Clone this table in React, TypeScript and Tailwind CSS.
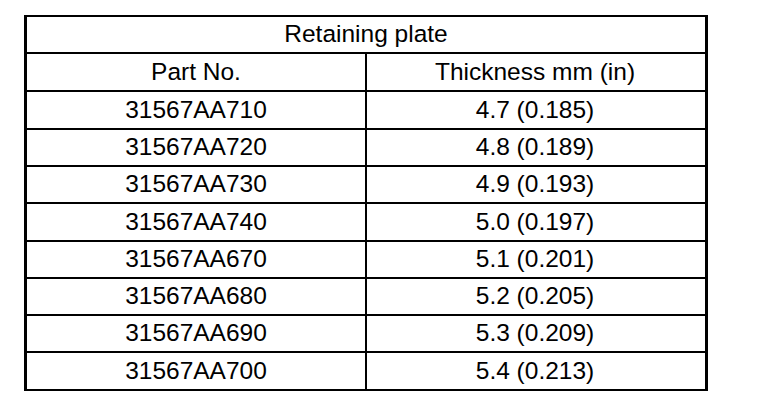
import React from "react";

const rows: [string, string, string][] = [
  ["31567AA710", "4.7 (0.185)", "h-[38px]"],
  ["31567AA720", "4.8 (0.189)", "h-[37px]"],
  ["31567AA730", "4.9 (0.193)", "h-[37px]"],
  ["31567AA740", "5.0 (0.197)", "h-[38px]"],
  ["31567AA670", "5.1 (0.201)", "h-[37px]"],
  ["31567AA680", "5.2 (0.205)", "h-[37px]"],
  ["31567AA690", "5.3 (0.209)", "h-[37px]"],
  ["31567AA700", "5.4 (0.213)", "h-[38px]"],
];

export default function App() {
  return (
    <div
      className="w-[768px] h-[406px] bg-white pt-[15px] pl-[24px] text-black text-[24.5px] leading-none"
      style={{ fontFamily: '"Liberation Sans", Arial, Helvetica, sans-serif' }}
    >
      <div className="w-[684px] border-x-[3px] border-y-2 border-black">
        <div className="h-[35px] flex items-center justify-center">Retaining plate</div>
        <div className="grid grid-cols-[338px_338px] border-t-2 border-black h-[38px]">
          <div className="flex items-center justify-center">Part No.</div>
          <div className="flex items-center justify-center border-l-2 border-black">Thickness mm (in)</div>
        </div>
        {rows.map(([p, t, h]) => (
          <div key={p} className={`grid grid-cols-[338px_338px] border-t-2 border-black ${h}`}>
            <div className="flex items-center justify-center">{p}</div>
            <div className="flex items-center justify-center border-l-2 border-black">{t}</div>
          </div>
        ))}
      </div>
    </div>
  );
}
